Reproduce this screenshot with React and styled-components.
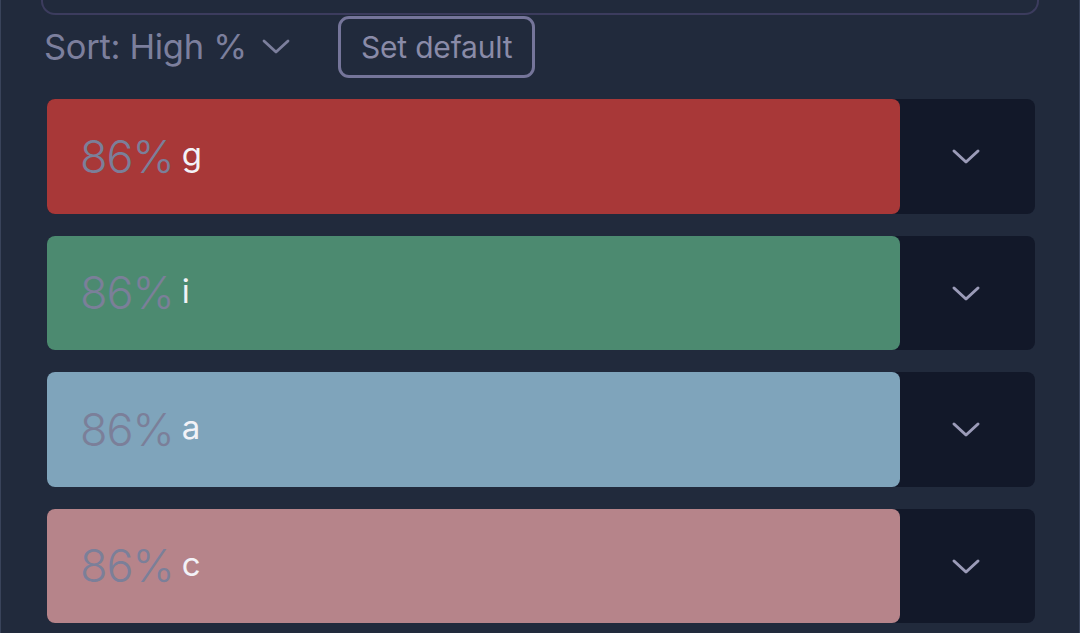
import React from "react";
import styled, { createGlobalStyle } from "styled-components";

const Global = createGlobalStyle`
  html, body { margin: 0; padding: 0; background: #212a3c; }
  body { font-family: Inter, "Noto Sans", sans-serif; }
`;

const Page = styled.div`
  box-sizing: border-box;
  width: 1080px;
  height: 633px;
  overflow: hidden;
  background: #212a3c;
  border-left: 1px solid #39435a;
  border-right: 1px solid #39435a;
  padding: 0 44px 0 46px;
`;

const SearchEdge = styled.div`
  box-sizing: border-box;
  height: 15px;
  margin-left: -6px;
  margin-right: -4px;
  border: 2px solid #3c3c5e;
  border-top: none;
  border-radius: 0 0 14px 14px;
`;

const SortRow = styled.div`
  display: flex;
  align-items: center;
  height: 62px;
  margin: 1px 0 21px -3px;
`;

const SortLabel = styled.button`
  display: flex;
  align-items: center;
  gap: 14px;
  background: none;
  border: none;
  padding: 0 0 2px;
  font-family: inherit;
  font-size: 34.5px;
  letter-spacing: -0.3px;
  color: #7c7f9d;
  width: 294px;
  cursor: pointer;
`;

const DefaultButton = styled.button`
  box-sizing: border-box;
  height: 62px;
  padding: 0 20px;
  border: 3px solid #75759a;
  border-radius: 11px;
  background: transparent;
  color: #8a8ba8;
  font-family: inherit;
  font-size: 30px;
  letter-spacing: -0.2px;
`;

const List = styled.div`
  display: flex;
  flex-direction: column;
  gap: 22px;
`;

const Row = styled.div`
  display: flex;
  height: 114.5px;
  background: #121829;
  border-radius: 8px;
`;

const Bar = styled.div`
  box-sizing: border-box;
  width: 853px;
  display: flex;
  align-items: center;
  padding-left: 33px;
  gap: 8px;
  border-radius: 8px;
  background: ${(p) => p.$color};
`;

const Pct = styled.span`
  font-size: 45px;
  font-weight: 300;
  color: #7b7f99;
  letter-spacing: -1px;
`;

const Name = styled.span`
  font-size: 33px;
  color: #f2f2f7;
  margin-top: -4px;
`;

const Toggle = styled.div`
  flex: 1;
  display: flex;
  align-items: center;
  justify-content: center;
  padding-right: 3px;
`;

const Chevron = ({ size = 30, color = "#9b9bb8", width = 3 }) => (
  <svg width={size} height={size} viewBox="0 0 30 30" fill="none">
    <path d="M3 10 L15 21 L27 10" stroke={color} strokeWidth={width} strokeLinecap="round" strokeLinejoin="round" />
  </svg>
);

const items = [
  { name: "g", color: "#a83838" },
  { name: "i", color: "#4c8a70" },
  { name: "a", color: "#7fa4bb" },
  { name: "c", color: "#b6848a" },
];

export default function App() {
  return (
    <>
      <Global />
      <Page>
        <SearchEdge />
        <SortRow>
          <SortLabel>
            Sort: High %
            <Chevron size={30} color="#7c7f9d" width={2.8} />
          </SortLabel>
          <DefaultButton>Set default</DefaultButton>
        </SortRow>
        <List>
          {items.map((it) => (
            <Row key={it.name}>
              <Bar $color={it.color}>
                <Pct>86%</Pct>
                <Name>{it.name}</Name>
              </Bar>
              <Toggle>
                <Chevron />
              </Toggle>
            </Row>
          ))}
        </List>
      </Page>
    </>
  );
}
